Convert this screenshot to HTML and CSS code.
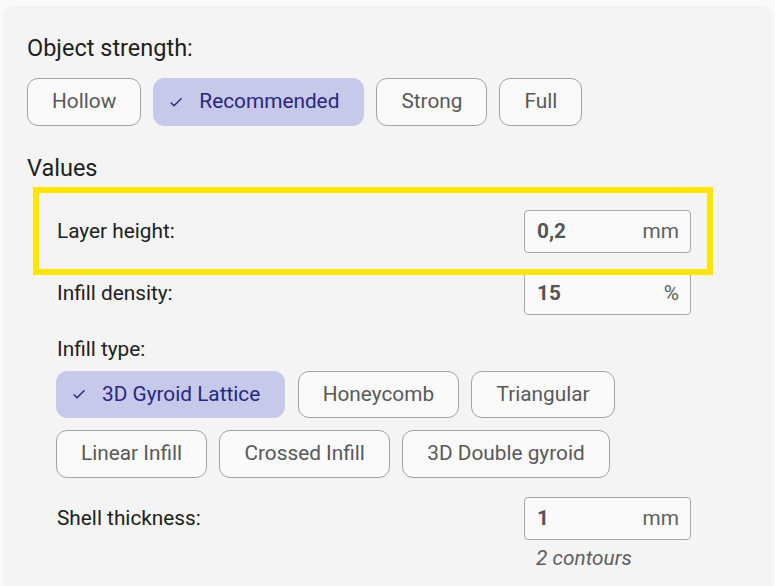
FILE: index.html
```html
<!DOCTYPE html>
<html>
<head>
<meta charset="utf-8">
<link rel="stylesheet" href="styles.css">
</head>
<body>
<div class="panel">
  <h2 class="heading title">Object strength:</h2>
  <div class="chips">
    <button class="chip">Hollow</button>
    <button class="chip selected"><svg class="check" viewBox="0 0 24 24"><path d="M9 16.17L4.83 12l-1.42 1.41L9 19 21 7l-1.41-1.41z"/></svg>Recommended</button>
    <button class="chip">Strong</button>
    <button class="chip">Full</button>
  </div>
  <h2 class="heading section">Values</h2>
  <div class="values">
    <div class="row highlighted">
      <span class="label">Layer height:</span>
      <div class="input"><span class="val">0,2</span><span class="unit">mm</span></div>
    </div>
    <div class="row">
      <span class="label">Infill density:</span>
      <div class="input"><span class="val">15</span><span class="unit">%</span></div>
    </div>
    <div class="label type-label">Infill type:</div>
    <div class="chips wrap">
      <button class="chip selected"><svg class="check" viewBox="0 0 24 24"><path d="M9 16.17L4.83 12l-1.42 1.41L9 19 21 7l-1.41-1.41z"/></svg>3D Gyroid Lattice</button>
      <button class="chip">Honeycomb</button>
      <button class="chip">Triangular</button>
      <button class="chip">Linear Infill</button>
      <button class="chip">Crossed Infill</button>
      <button class="chip">3D Double gyroid</button>
    </div>
    <div class="row shell">
      <span class="label">Shell thickness:</span>
      <div class="input"><span class="val">1</span><span class="unit">mm</span></div>
    </div>
    <div class="hint-row"><span class="hint">2 contours</span></div>
  </div>
</div>
</body>
</html>
```
FILE: styles.css
```css
* { box-sizing: border-box; }
html, body { margin: 0; padding: 0; }
body {
  background: #fafafa;
  font-family: Roboto, "Liberation Sans", sans-serif;
  color: #212121;
  height: 586px;
  overflow: hidden;
}
.panel {
  margin: 6px 2px 0 2px;
  background: #f4f4f4;
  border-radius: 10px 10px 0 0;
  padding: 28px 25px 0 25px;
  height: 580px;
  overflow: hidden;
}
.heading {
  margin: 0;
  font-weight: 400;
  font-size: 23.5px;
  line-height: 28px;
  color: #212121;
}
.chips {
  display: flex;
  gap: 12px;
  margin-top: 16px;
}
.chips.wrap {
  flex-wrap: wrap;
  width: 580px;
  margin-top: 10px;
  column-gap: 12.4px;
  row-gap: 12px;
}
.chip {
  appearance: none;
  font-family: inherit;
  font-size: 20.8px;
  height: 47.5px;
  padding: 0 24px;
  border: 1px solid #a3a3a3;
  border-radius: 11px;
  background: #fafafa;
  color: #595959;
  display: flex;
  align-items: center;
  line-height: 1;
  cursor: pointer;
}
.chip.selected {
  background: #c6c9e9;
  border-color: #c6c9e9;
  color: #28277e;
  padding-left: 14px;
}
.check {
  width: 16px;
  height: 16px;
  fill: #28277e;
  margin-right: 15px;
  flex: none;
}
.section { margin-top: 28px; }
.values {
  margin-left: 29px;
  width: 635px;
  margin-top: 28px;
}
.row {
  display: flex;
  align-items: center;
  justify-content: space-between;
  position: relative;
  margin-bottom: 19px;
}
.label {
  font-size: 20.8px;
  line-height: 24px;
  color: #212121;
  padding-left: 1px;
}
.input {
  width: 167px;
  height: 43px;
  border: 1px solid #a8a8a8;
  border-radius: 4px;
  background: #fafafa;
  display: flex;
  align-items: center;
  justify-content: space-between;
  padding: 0 11px 0 12px;
  font-size: 20.8px;
}
.val { font-weight: 700; color: #555; }
.unit { color: #606060; }
.highlighted::after {
  content: "";
  position: absolute;
  left: -23px;
  right: -22px;
  top: -23px;
  bottom: -22px;
  border: 6px solid #ffe600;
  z-index: 2;
  pointer-events: none;
}
.type-label { margin-top: 22px; }
.row.shell { margin-top: 19px; margin-bottom: 6px; }
.hint-row {
  display: flex;
  justify-content: flex-end;
}
.hint {
  width: 167px;
  padding-left: 12px;
  font-size: 20.8px;
  line-height: 24px;
  font-style: italic;
  color: #606060;
}
```
